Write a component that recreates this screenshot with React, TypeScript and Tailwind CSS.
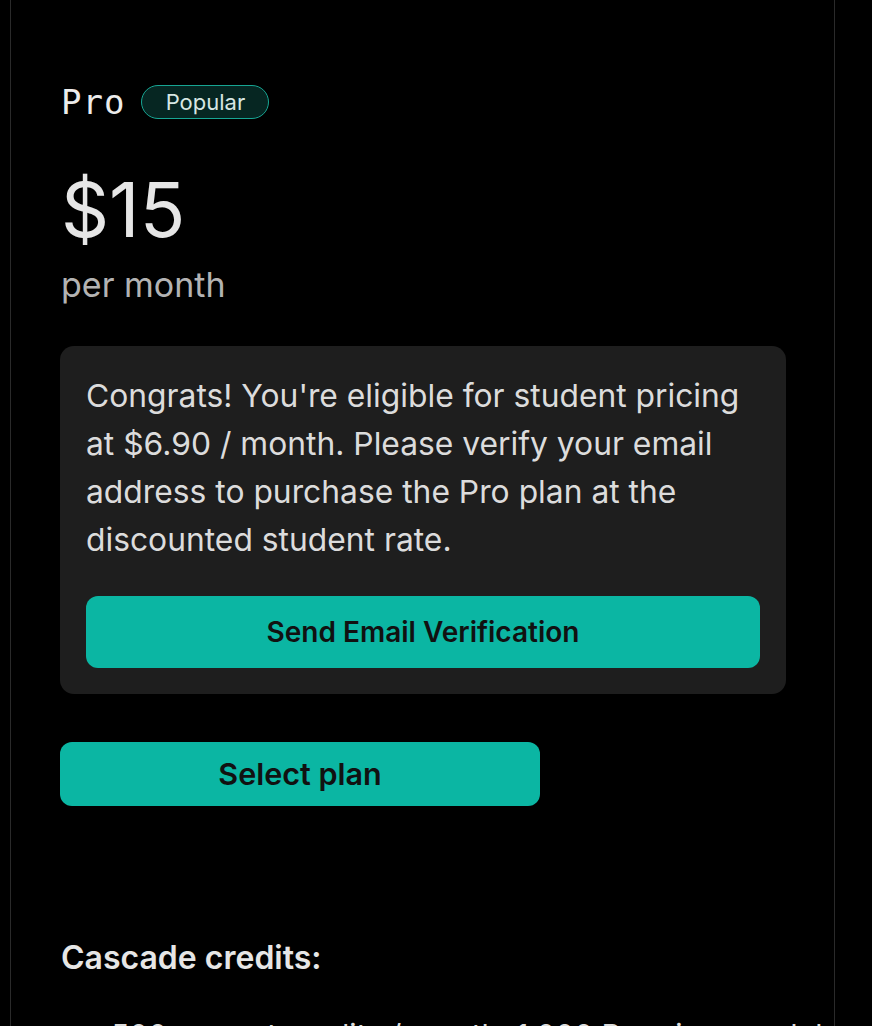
import React from "react";

const App = () => {
  return (
    <div className="min-h-[1026px] w-[872px] overflow-hidden bg-black font-['Inter',sans-serif] text-[#e6e6e6]">
      <div className="ml-[10px] h-[1026px] w-[825px] overflow-hidden border-x border-[#2a2a2a] pl-[49px] pt-[85px]">
        <div className="flex items-center gap-[16px]">
          <h3 className="pl-[1px] font-['DejaVu_Sans_Mono',monospace] text-[34px] leading-[34px] font-medium tracking-[1px] text-[#ececec]">
            Pro
          </h3>
          <span className="flex h-[34px] w-[128px] items-center justify-center rounded-full border border-[#17a593] bg-[#062622] text-[22px] text-[#d7e7e4]">
            Popular
          </span>
        </div>

        <div className="mt-[53px] pl-[1px] text-[75px] leading-[75px] font-normal text-[#e6e6e6]">
          $15
        </div>
        <div className="mt-[18px] pl-[1px] text-[34px] leading-[40px] text-[#b3b3b3]">
          per month
        </div>

        <div className="mt-[41px] w-[726px] rounded-[14px] bg-[#1e1e1e] px-[26px] pt-[26px] pb-[26px]">
          <p className="text-[31.8px] leading-[48px] text-[#dcdcdc]">
            Congrats! You're eligible for student pricing at $6.90 / month.
            Please verify your email address to purchase the Pro plan at the
            discounted student rate.
          </p>
          <button className="mt-[32px] flex h-[72px] w-full items-center justify-center rounded-[12px] bg-[#0bb6a3] text-[28px] font-semibold text-[#111]">
            Send Email Verification
          </button>
        </div>

        <button className="mt-[48px] flex h-[64px] w-[480px] items-center justify-center rounded-[12px] bg-[#0bb6a3] text-[30.5px] font-semibold text-[#111]">
          Select plan
        </button>

        <div className="mt-[134px] pl-[1px] text-[32px] leading-[36px] font-semibold text-[#e6e6e6]">
          Cascade credits:
        </div>
        <ul className="mt-[35px] pl-[51px] text-[30px] leading-[48px] text-[#dcdcdc]">
          <li>500 prompt credits / month, 1,000 Premium model credits</li>
        </ul>
      </div>
    </div>
  );
};

export default App;
